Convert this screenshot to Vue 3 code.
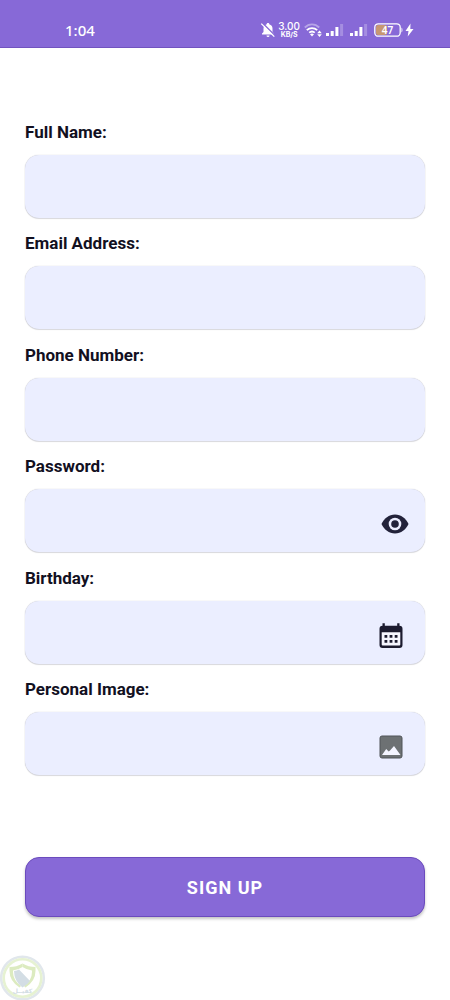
<script setup>
import { ref } from 'vue'

const showPassword = ref(false)
const form = ref({ name: '', email: '', phone: '', password: '', birthday: '', image: '' })

const fields = [
  { id: 'name', label: 'Full Name:', type: 'text' },
  { id: 'email', label: 'Email Address:', type: 'email' },
  { id: 'phone', label: 'Phone Number:', type: 'tel' },
  { id: 'password', label: 'Password:', type: 'password', icon: 'eye', action: 'Show password' },
  { id: 'birthday', label: 'Birthday:', type: 'text', icon: 'calendar', action: 'Pick a date' },
  { id: 'image', label: 'Personal Image:', type: 'text', icon: 'image', action: 'Choose an image' }
]

function inputType(field) {
  return field.id === 'password' && showPassword.value ? 'text' : field.type
}

function onAction(field) {
  if (field.id === 'password') showPassword.value = !showPassword.value
}
</script>

<template>
  <div class="page">
    <header class="status">
      <span class="clock">1:04</span>
      <div class="indicators">
        <svg class="bell" width="16" height="16" viewBox="0 0 16 16" aria-hidden="true">
          <path d="M8 1c.8 0 1.300.5 1.300 1.200 2 .6 3.200 2.200 3.200 4.300v3.500l1.500 1.600v.9H2v-.9L3.500 10V6.500c0-2.100 1.200-3.700 3.200-4.300C6.700 1.500 7.200 1 8 1z" fill="#fff" />
          <path d="M6.500 13.500h3a1.500 1.500 0 0 1-3 0z" fill="#fff" />
          <path d="M2.500 1L15.500 14" stroke="#8769d7" stroke-width="1.500" />
          <path d="M1.300 1.600L14.300 14.600" stroke="#fff" stroke-width="1.300" />
        </svg>
        <span class="speed"><span class="rate">3.00</span><span class="unit">KB/S</span></span>
        <svg class="wifi" width="18" height="16" viewBox="0 0 18 16" aria-hidden="true">
          <g fill="none" stroke="#fff" stroke-width="1.800">
            <path d="M.8 5.500C5 1.300 11 1.300 15.200 5.500" opacity=".4" />
            <path d="M2.800 8.200C5.800 5.300 10.200 5.300 13.200 8.200" />
            <path d="M5.200 10.700C6.900 9.200 9.100 9.200 10.800 10.700" />
          </g>
          <path d="M8 14.500l-2-2.200q2-1.600 4 0z" fill="#fff" />
          <path d="M15.500 8.500l2.300 2.700h-4.600zM15.500 15l2.300-2.700h-4.600z" fill="#fff" />
        </svg>
        <svg v-for="n in 2" :key="n" class="signal" width="18" height="12" viewBox="0 0 18 12" aria-hidden="true">
          <path d="M0 9h3v3H0zM4.700 7h3v5h-3zM9.400 3h3v9h-3z" fill="#fff" />
          <path d="M14.100 0h3v12h-3z" fill="#fff" opacity=".25" />
        </svg>
        <svg class="battery" width="29" height="14" viewBox="0 0 29 14" role="img" aria-label="Battery 47 percent">
          <rect x="2" y="2" width="11" height="10" rx="2" fill="#c79772" />
          <rect x=".8" y=".8" width="25.400" height="12.400" rx="3.500" fill="none" stroke="#fff" stroke-width="1.300" />
          <path d="M27.500 4.500c1.300.8 1.300 4.200 0 5z" fill="#fff" />
          <text x="13.500" y="10.500" text-anchor="middle" class="charge">47</text>
        </svg>
        <svg class="bolt" width="9" height="14" viewBox="0 0 9 14" aria-hidden="true">
          <path d="M5.500.5L.5 8h3l-.8 5.500L8.500 6H5.300z" fill="#fff" />
        </svg>
      </div>
    </header>

    <form class="form" @submit.prevent>
      <div class="fields">
        <div v-for="field in fields" :key="field.id" class="field">
          <label :for="field.id">{{ field.label }}</label>
          <div class="box">
            <input :id="field.id" v-model="form[field.id]" :type="inputType(field)" />
            <button v-if="field.icon" type="button" class="action" :class="field.icon" :aria-label="field.action" @click="onAction(field)">
              <svg v-if="field.icon === 'eye'" width="28" height="28" viewBox="0 0 28 28">
                <path d="M14 4.500C8 4.500 3 8.400.5 14c2.500 5.600 7.500 9.500 13.500 9.500s11-3.900 13.500-9.500C25 8.400 20 4.500 14 4.500z" fill="#22223a" />
                <circle cx="14" cy="14" r="6.300" fill="#eceeff" />
                <circle cx="14" cy="14" r="3.800" fill="#22223a" />
              </svg>
              <svg v-else-if="field.icon === 'calendar'" width="28" height="28" viewBox="0 0 28 28">
                <path d="M5.500 1.200h2.300v2.600h12.400V1.200h2.300v2.600a3 3 0 0 1 3 3V23a3 3 0 0 1-3 3H5.500a3 3 0 0 1-3-3V6.800a3 3 0 0 1 3-3z" fill="#1c1b2f" />
                <path d="M4.700 10.300h18.600v12.200a1 1 0 0 1-1 1H5.700a1 1 0 0 1-1-1z" fill="#f6f6ff" />
                <path d="M7.500 13h2.800v2.800H7.500zM12.600 13h2.800v2.800h-2.800zM17.700 13h2.800v2.800h-2.800zM7.500 18h2.800v2.800H7.500zM12.600 18h2.800v2.800h-2.800zM17.700 18h2.800v2.800h-2.800z" fill="#1c1b2f" />
              </svg>
              <svg v-else width="28" height="28" viewBox="0 0 28 28">
                <rect x="3" y="3" width="22" height="22" rx="2" fill="#6d7173" stroke="#505458" />
                <path d="M5 22l4.200-6 2.500 2.600 1.300-1 4-4.600 6.500 9z" fill="#f4f5ff" />
              </svg>
            </button>
          </div>
        </div>
      </div>
      <button type="submit" class="submit">SIGN UP</button>
    </form>

    <svg class="watermark" width="46" height="45" viewBox="0 0 46 45" aria-hidden="true">
      <circle cx="22.500" cy="23" r="21.300" fill="#fff" stroke="#e1e7ec" stroke-width="2.600" />
      <circle cx="22.500" cy="23" r="18.800" fill="#fff" stroke="#e6f2d2" stroke-width="2.600" />
      <path d="M22.500 8.500q6 3.500 13 3.500V16q0 10-10 16.500L24 31q8-6 8-14v-1.500q-5-.5-9.500-3.500z" fill="#dcebc0" />
      <path d="M9.500 12q7 0 13-3.500v3.500q-4.500 3-9.500 3.500V17q0 8 8 14l-1.500 1.500Q9.500 26 9.500 16z" fill="#dcebc0" />
      <path d="M14 16q3-.2 5-1.500L30 26q-2.500 3.500-7.500 6.500Q14 26 14 16z" fill="#d3dde4" />
      <text x="22.500" y="38" text-anchor="middle" class="mark">كفيــل</text>
    </svg>
  </div>
</template>

<style>
html,
body {
  background: #fff;
}
</style>

<style scoped>
.page {
  position: relative;
  display: flex;
  flex-direction: column;
  min-height: 100vh;
  background: #fff;
  color: #12101f;
  font-family: Roboto, "Liberation Sans", sans-serif;
}
.page *,
.page {
  box-sizing: border-box;
}
.status {
  display: flex;
  justify-content: space-between;
  align-items: center;
  height: 48px;
  padding: 13px 36px 0 65px;
  background: #8769d7;
  border-bottom: 1px solid #7153bf;
  color: #fff;
}
.clock {
  font-family: "Noto Sans", sans-serif;
  font-size: 15px;
  font-weight: 500;
  line-height: 20px;
}
.indicators {
  display: flex;
  align-items: center;
  height: 20px;
}
.speed {
  display: flex;
  flex-direction: column;
  align-items: center;
  margin: 0 4px 0 2px;
  font-family: Inter, sans-serif;
}
.rate {
  font-size: 10px;
  font-weight: 500;
  line-height: 10px;
}
.unit {
  font-size: 7px;
  font-weight: 700;
  line-height: 8px;
}
.wifi {
  margin-right: 4px;
}
.signal {
  margin-right: 6px;
}
.battery {
  margin-right: 2px;
}
.charge {
  fill: #fff;
  font: 600 10px "Noto Sans", sans-serif;
}
.form {
  flex: 1;
  display: flex;
  flex-direction: column;
  padding: 72px 25px 83px;
}
.fields {
  flex: 1;
  display: flex;
  flex-direction: column;
  justify-content: space-between;
  gap: 12px;
  margin-bottom: 82px;
}
.field {
  display: flex;
  flex-direction: column;
  gap: 11px;
}
label {
  font-size: 17px;
  font-weight: 700;
  line-height: 24px;
}
.box {
  display: flex;
  align-items: center;
  height: 63px;
  padding: 0 16px;
  background: #ebeeff;
  border-radius: 14px;
  box-shadow: 0 0 1px #b8b8bc, 0 1px 1px #dcdce0;
}
input {
  flex: 1;
  min-width: 0;
  height: 100%;
  padding: 0;
  border: 0;
  outline: 0;
  background: transparent;
  color: inherit;
  font: 400 17px Roboto, sans-serif;
}
.action {
  display: flex;
  margin-right: 4px;
  padding: 7px 0 0;
  border: 0;
  background: transparent;
  cursor: pointer;
}
.action.eye {
  margin-right: 0;
}
.submit {
  height: 60px;
  padding: 0;
  border: 1px solid #6b4bbd;
  border-radius: 14px;
  background: #8769d7;
  box-shadow: 0 2px 3px #c4c4c4;
  color: #fff;
  font: 700 18px Roboto, sans-serif;
  letter-spacing: 1px;
  cursor: pointer;
}
.watermark {
  position: absolute;
  left: 0;
  bottom: 0;
}
.mark {
  fill: #d3dde4;
  font: 700 6px "DejaVu Sans", sans-serif;
}
</style>
